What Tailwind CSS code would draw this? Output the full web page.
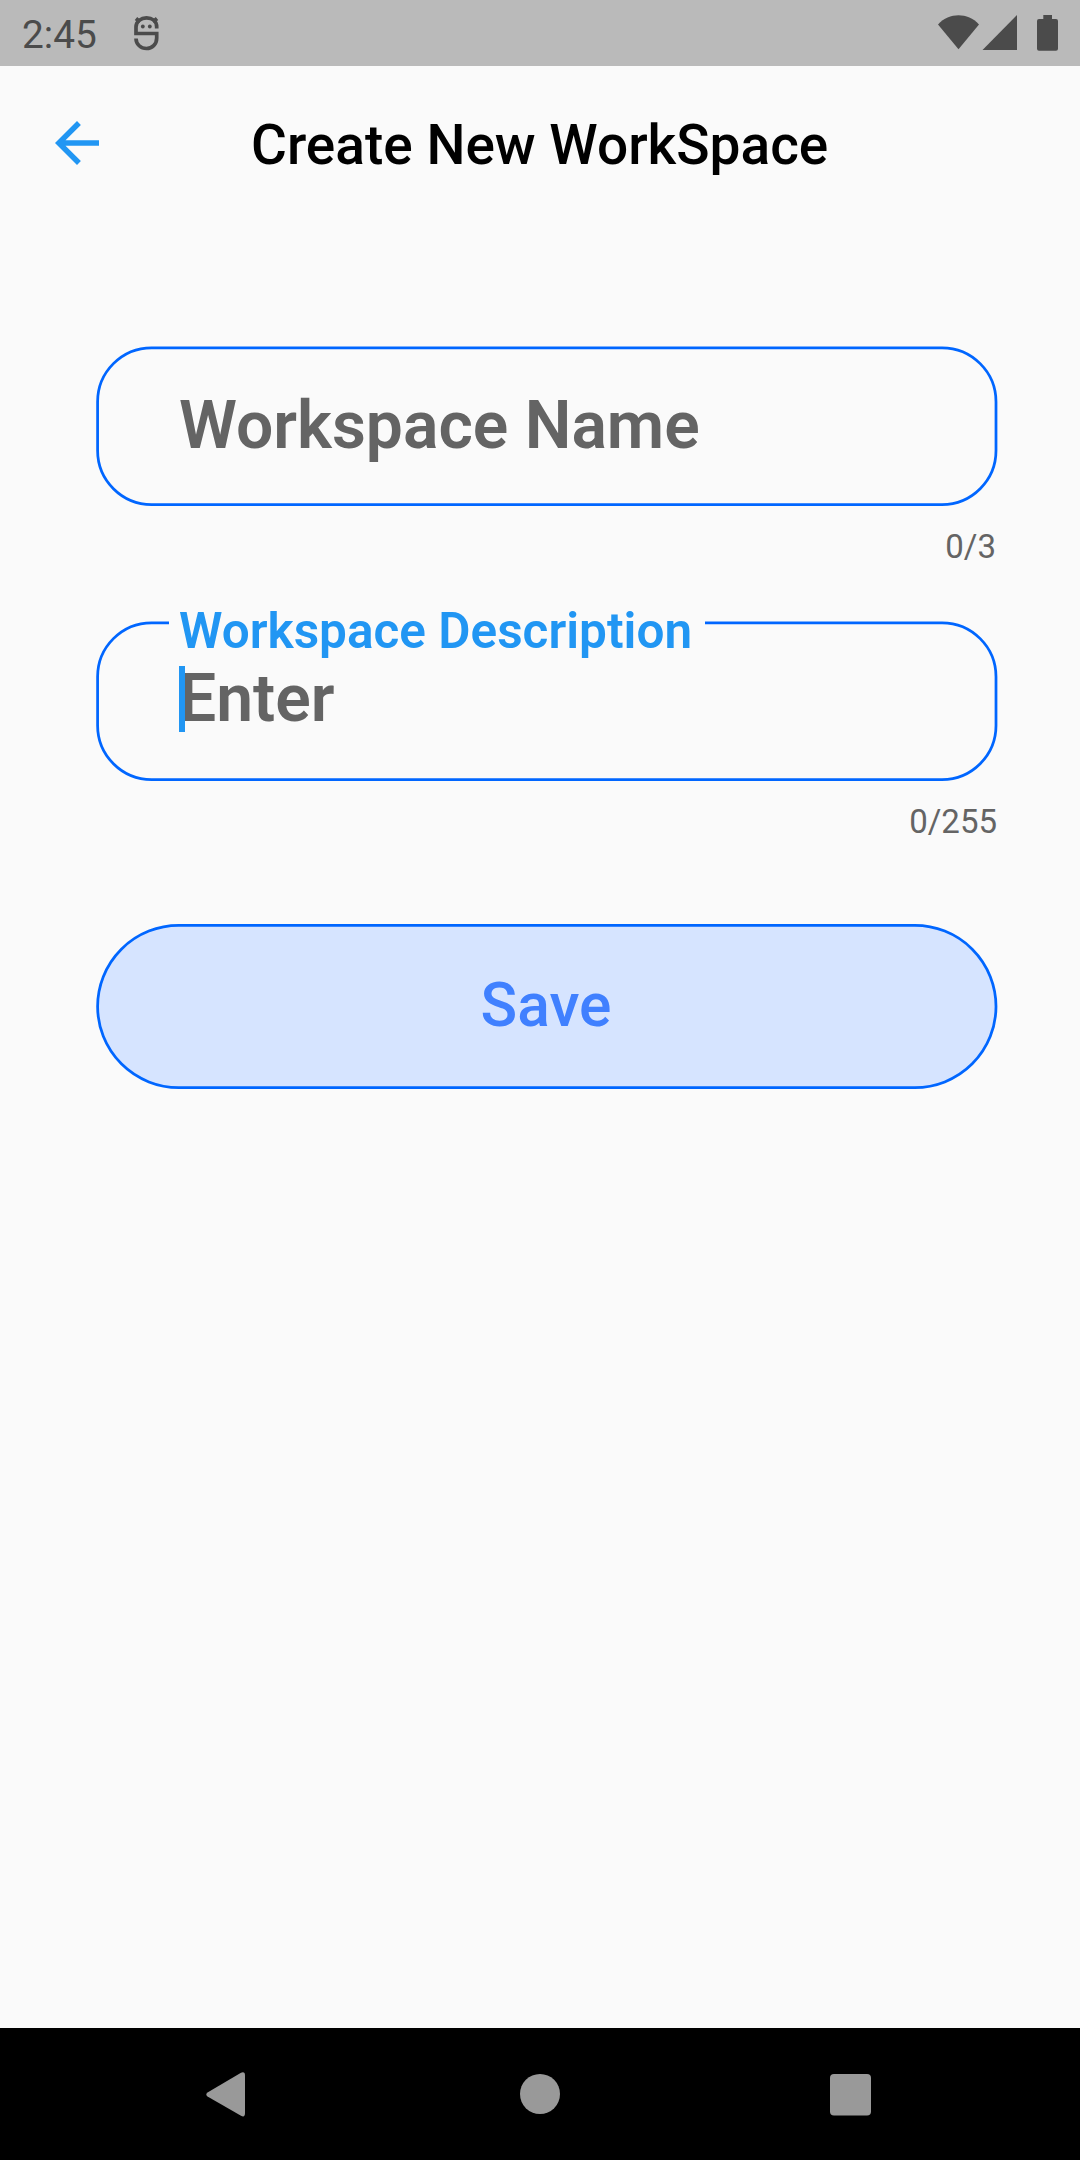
<!DOCTYPE html>
<html lang="en">
<head>
<meta charset="utf-8">
<title>Create New WorkSpace</title>
<script src="https://cdn.jsdelivr.net/npm/@tailwindcss/browser@4"></script>
</head>
<body class="flex h-[2160px] w-[1080px] flex-col overflow-hidden bg-[#fafafa] font-['Roboto',sans-serif]">
  <!-- status bar -->
  <header class="flex h-[66px] shrink-0 items-center bg-[#bababa] text-[#4b4b4b]">
    <span class="ml-[22px] w-[110px] pt-[3px] text-[38.8px] leading-[45px]">2:45</span>
    <svg class="h-[66px] w-[30px]" viewBox="132 0 30 66" fill="none" stroke="currentColor" stroke-width="3.700">
      <path d="M156.700 28.500V27C156.700 21 152 17.900 146.500 17.900S136 21.500 136 27V33.500H156.700V38C156.700 44.500 152 48.500 146.500 48.500S136 44.500 136 38.500"/>
      <path d="M136 18.500L140 22M157 18.500L153 22"/>
      <g fill="currentColor" stroke="none"><circle cx="142.800" cy="26.500" r="1.900"/><circle cx="149.800" cy="26.500" r="1.900"/></g>
    </svg>
    <svg class="ml-auto h-[66px] w-[150px]" viewBox="930 0 150 66" fill="currentColor">
      <path d="M938 24.400C949.500 12.300 967.500 12.300 979 24.400L958.500 49.300Z"/>
      <path d="M1017 15V50H982.500Z"/>
      <path d="M1043.300 15h8.700v4h4q2 0 2 2v27.700q0 2-2 2h-17q-2 0-2-2V21q0-2 2-2h4.300Z"/>
    </svg>
  </header>

  <!-- app bar -->
  <div class="flex h-[154px] shrink-0 items-center">
    <svg class="ml-[44px] h-[66px] w-[66px]" viewBox="0 0 24 24" fill="#2196f3"><path d="M20 11H7.830l5.590-5.590L12 4l-8 8 8 8 1.410-1.410L7.830 13H20v-2z"/></svg>
    <h1 class="ml-[141px] pt-[3px] text-[55px] leading-[64px] font-medium whitespace-nowrap text-black">Create New WorkSpace</h1>
  </div>

  <main class="flex grow flex-col px-[96px] pt-[126px]">
    <div class="relative flex h-[160px] items-center pb-[2px] pl-[83px]">
      <svg class="absolute inset-0 h-[160px] w-[902px]" fill="none" stroke="#0066ff" stroke-width="2.750"><rect x="1.600" y="1.800" width="898.400" height="156.700" rx="54"/></svg>
      <span class="text-[66px] leading-[77px] font-semibold text-[#646464]">Workspace Name</span>
    </div>
    <div class="mt-[21px] h-[39px] w-[900px] text-right text-[33px] leading-[39px] text-[#646464]">0/3</div>

    <div class="relative mt-[55px] h-[160px] pl-[83px]">
      <svg class="absolute inset-0 h-[160px] w-[902px]" fill="none" stroke="#0066ff" stroke-width="2.750"><path d="M73 1.800H55.600A54 54 0 0 0 1.600 55.800V104.500A54 54 0 0 0 55.600 158.500H846A54 54 0 0 0 900 104.500V55.800A54 54 0 0 0 846 1.800H609"/></svg>
      <label class="-mt-[19px] block text-[49.5px] leading-[58px] font-semibold text-[#2196f3]">Workspace Description</label>
      <div class="relative text-[66px] leading-[77px] font-semibold text-[#646464]">Enter<i class="absolute top-[6px] left-0 h-[66px] w-[5.5px] bg-[#2196f3]"></i></div>
    </div>
    <div class="mt-[21px] h-[39px] w-[901px] text-right text-[33px] leading-[39px] text-[#646464]">0/255</div>

    <button class="relative mt-[83px] flex h-[165px] w-[902px] items-center justify-center pr-[2px] pb-[2px] text-[60.5px] leading-[71px] font-medium text-[#4080ff]">
      <svg class="absolute inset-0 h-[165px] w-[902px]" fill="#d6e4ff" stroke="#0066ff" stroke-width="2.750"><rect x="1.600" y="1.400" width="898.400" height="162.200" rx="81.100"/></svg>
      <span class="relative">Save</span>
    </button>
  </main>

  <!-- system navigation -->
  <nav class="flex h-[132px] shrink-0 items-center bg-black">
    <svg class="h-[132px] w-[1080px]" viewBox="0 2028 1080 132" fill="#999">
      <path d="M207.500 2092.500L241 2072.700Q245 2071 245 2075.500V2113Q245 2118 241 2115.800L207.500 2096.500Q205 2094.500 207.500 2092.500Z"/>
      <circle cx="540" cy="2094" r="20"/>
      <rect x="830" y="2074" width="41" height="41.500" rx="4"/>
    </svg>
  </nav>
</body>
</html>
